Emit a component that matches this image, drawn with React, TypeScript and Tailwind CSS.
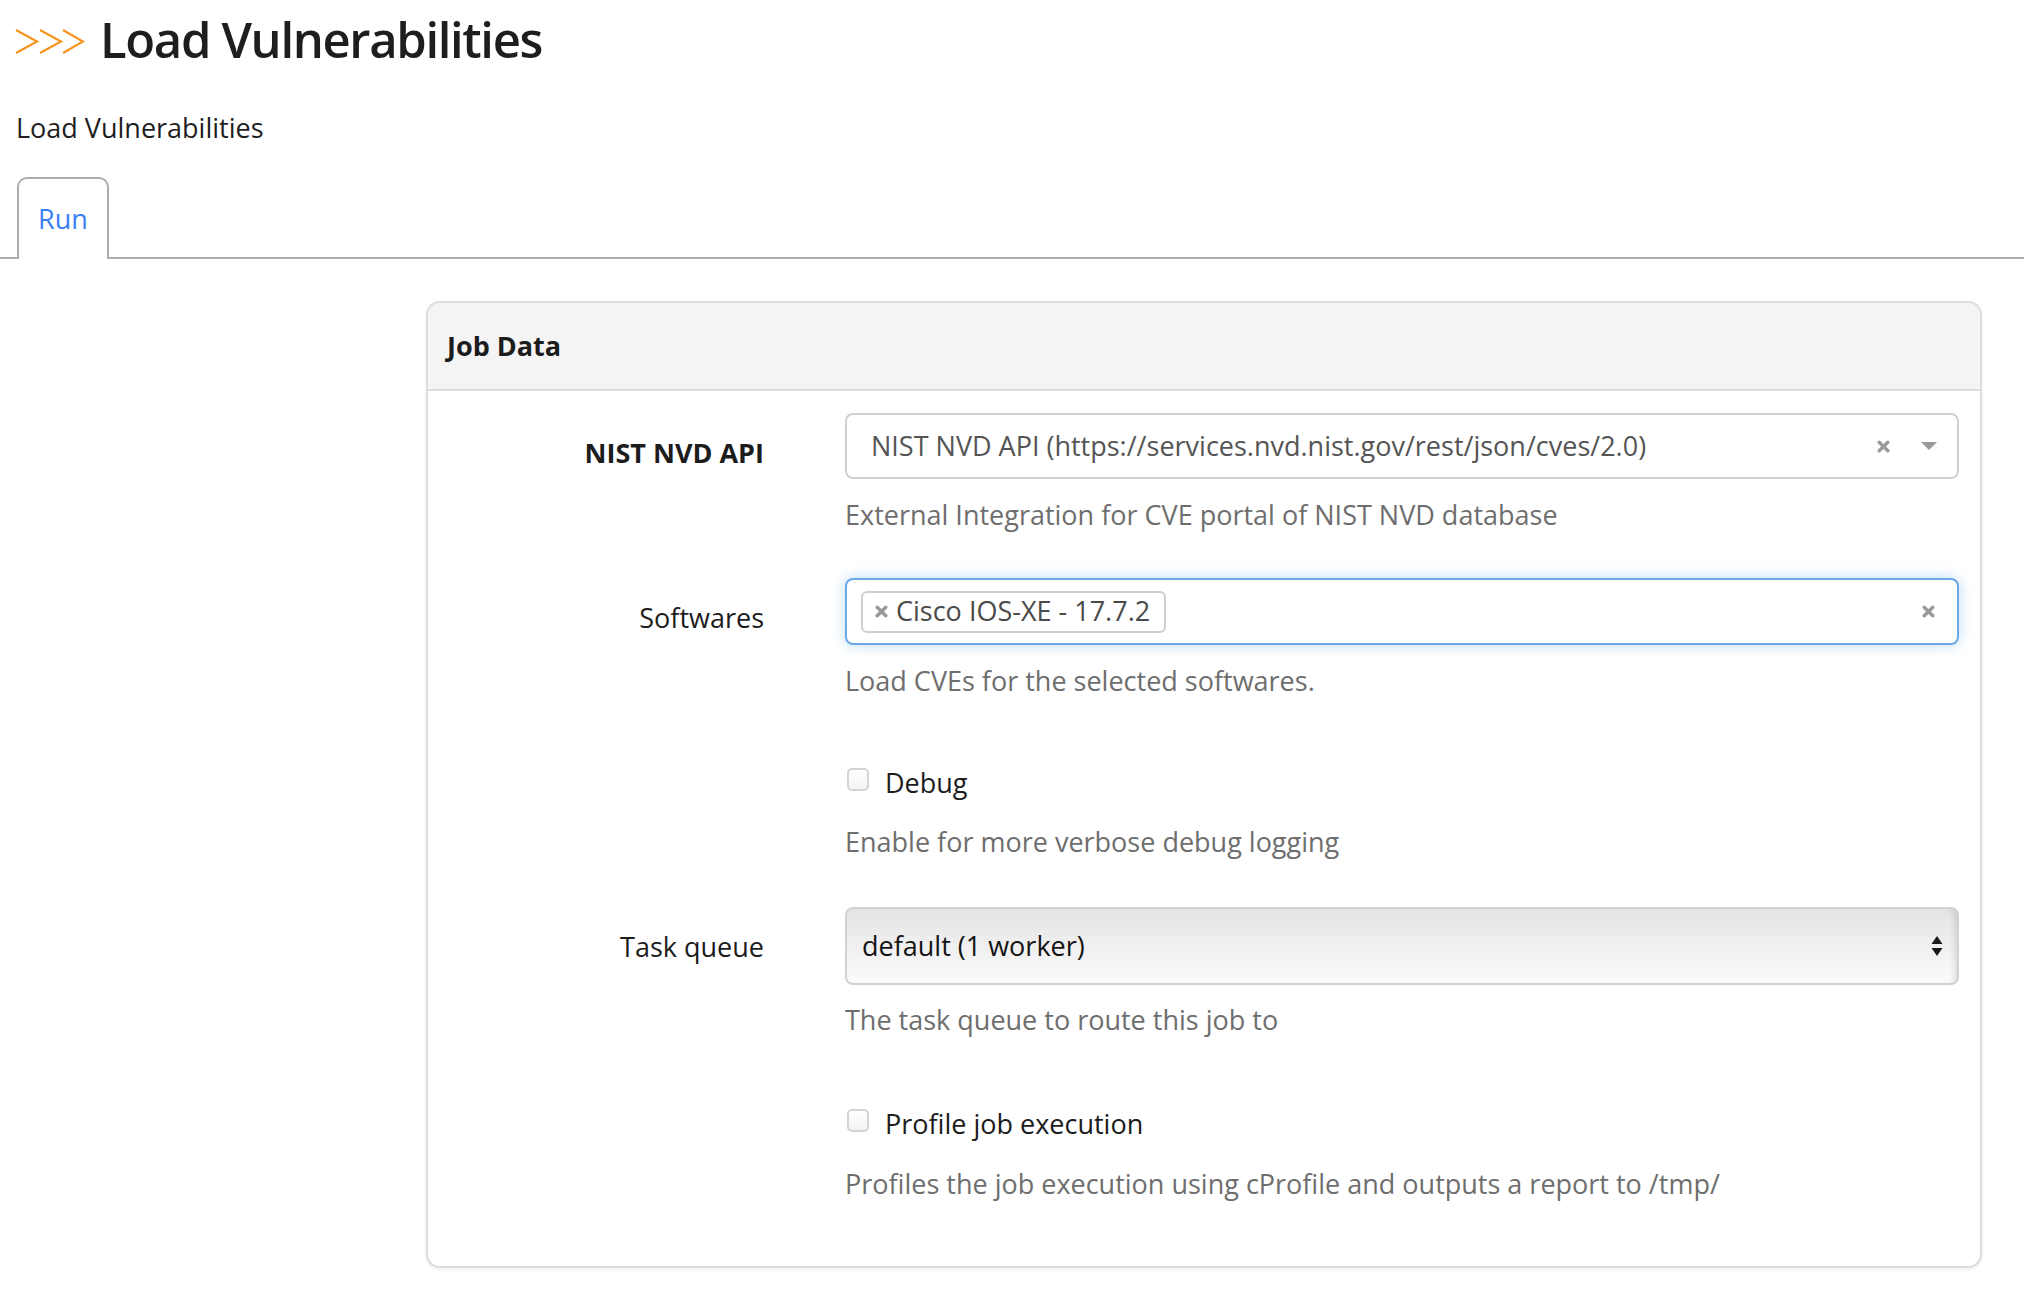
import React from "react";

function Chevrons() {
  return (
    <svg width="70" height="28" viewBox="0 0 70 28" className="mt-[28px] shrink-0">
      <g fill="none" stroke="#f7941e" strokeWidth="2.2" strokeLinejoin="miter">
        <polyline points="1,2 22,13.5 1,25" />
        <polyline points="25,2 46,13.5 25,25" />
        <polyline points="48,2 68,13.5 48,25" />
      </g>
    </svg>
  );
}

function SmallX({ className = "" }: { className?: string }) {
  return (
    <svg width="13" height="13" viewBox="0 0 13 13" className={className}>
      <path d="M2.2 2.2 L10.8 10.8 M10.8 2.2 L2.2 10.8" stroke="#9a9a9a" strokeWidth="3.4" strokeLinecap="round" />
    </svg>
  );
}

function FieldRow({
  label,
  bold,
  children,
  className = "",
}: {
  label?: string;
  bold?: boolean;
  children: React.ReactNode;
  className?: string;
}) {
  return (
    <div className={"flex " + className}>
      <div className="w-[336px] shrink-0 pt-[20px] text-right">
        {label ? (
          <span className={"leading-[38px] text-[#1c1c1c] " + (bold ? "font-bold" : "")}>{label}</span>
        ) : null}
      </div>
      <div className="ml-[81px] flex-1">{children}</div>
    </div>
  );
}

function Help({ children, className = "" }: { children: React.ReactNode; className?: string }) {
  return <div className={"leading-[38px] text-[#6e6e6e] " + className}>{children}</div>;
}

function Checkbox({ label }: { label: string }) {
  return (
    <div className="flex items-start leading-[38px] text-[#1c1c1c]">
      <span className="mt-[4px] ml-[2px] h-[23px] w-[22px] rounded-[5px] border-2 border-[#d4d4d4] bg-gradient-to-b from-white to-[#f3f3f3]" />
      <span className="ml-[16px]">{label}</span>
    </div>
  );
}

export default function App() {
  return (
    <div
      className="min-h-[1292px] w-[2024px] bg-white text-[27px]"
      style={{ fontFamily: "'Open Sans', 'Noto Sans', sans-serif" }}
    >
      {/* Page title */}
      <div className="flex h-[84px] items-start pl-[15px]">
        <Chevrons />
        <h1 className="ml-[15px] mt-[9px] text-[49px] font-semibold leading-[60px] tracking-[-1.35px] text-[#1e1e1e]">
          Load Vulnerabilities
        </h1>
      </div>

      {/* Subtitle */}
      <div className="flex h-[88px] items-center pl-[16px] text-[#1e1e1e]">Load Vulnerabilities</div>

      {/* Tabs */}
      <div className="mt-[5px] flex h-[82px] border-b-2 border-[#adadad] pl-[17px]">
        <div className="-mb-[2px] flex h-[82px] w-[92px] items-center justify-center rounded-t-[10px] border-2 border-b-0 border-[#adadad] bg-white text-[#3b80f2]">
          Run
        </div>
      </div>

      {/* Panel */}
      <div className="ml-[426px] mt-[42px] w-[1556px] rounded-[14px] border-2 border-[#dcdcdc] bg-white shadow-[0_2px_3px_rgba(0,0,0,0.06)]">
        <div className="flex h-[88px] items-center rounded-t-[12px] border-b-2 border-[#dcdcdc] bg-[#f4f4f4] pl-[19px]">
          <span className="font-bold text-[#1c1c1c]">Job Data</span>
        </div>

        <div className="pb-[63px] pr-[21px] pt-[22px]">
          {/* NIST NVD API */}
          <FieldRow label="NIST NVD API" bold>
            <div className="flex h-[66px] items-center rounded-[8px] border-2 border-[#d0d0d0] bg-white pl-[24px] pr-[20px]">
              <span className="flex-1 truncate text-[#555555]">
                NIST NVD API (https://services.nvd.nist.gov/rest/json/cves/2.0)
              </span>
              <SmallX className="mr-[31px]" />
              <svg width="16" height="9" viewBox="0 0 16 9">
                <path d="M0 0 L16 0 L8 8 Z" fill="#9a9a9a" />
              </svg>
            </div>
            <Help className="mt-[17px]">External Integration for CVE portal of NIST NVD database</Help>
          </FieldRow>

          {/* Softwares */}
          <FieldRow label="Softwares" className="mt-[44px]">
            <div className="flex h-[67px] items-center rounded-[8px] border-2 border-[#6aa9e6] bg-white pl-[14px] pr-[22px] shadow-[0_0_14px_rgba(102,175,233,0.45)]">
              <div className="flex h-[42px] items-center rounded-[6px] border-2 border-[#cfcfcf] pl-[12px] pr-[14px] text-[#4a4a4a]">
                <SmallX className="mr-[8px]" />
                <span>Cisco IOS-XE - 17.7.2</span>
              </div>
              <div className="flex-1" />
              <SmallX />
            </div>
            <Help className="mt-[17px]">Load CVEs for the selected softwares.</Help>
          </FieldRow>

          {/* Debug */}
          <FieldRow className="mt-[64px]">
            <Checkbox label="Debug" />
            <Help className="mt-[21px]">Enable for more verbose debug logging</Help>
          </FieldRow>

          {/* Task queue */}
          <FieldRow label="Task queue" className="mt-[46px]">
            <div className="flex h-[78px] items-center rounded-[8px] border-2 border-[#d2d2d2] bg-gradient-to-b from-[#e4e4e4] to-[#fbfbfb] pl-[15px] pr-[14px] shadow-[inset_-6px_0_6px_-4px_rgba(0,0,0,0.12)]">
              <span className="flex-1 text-[#141414]">default (1 worker)</span>
              <svg width="12" height="22" viewBox="0 0 12 22">
                <path d="M6 1 L11.5 9 L0.5 9 Z" fill="#1a1a1a" />
                <path d="M0.5 13 L11.5 13 L6 21 Z" fill="#1a1a1a" />
              </svg>
            </div>
            <Help className="mt-[16px]">The task queue to route this job to</Help>
          </FieldRow>

          {/* Profile */}
          <FieldRow className="mt-[66px]">
            <Checkbox label="Profile job execution" />
            <Help className="mt-[22px]">Profiles the job execution using cProfile and outputs a report to /tmp/</Help>
          </FieldRow>
        </div>
      </div>
    </div>
  );
}
